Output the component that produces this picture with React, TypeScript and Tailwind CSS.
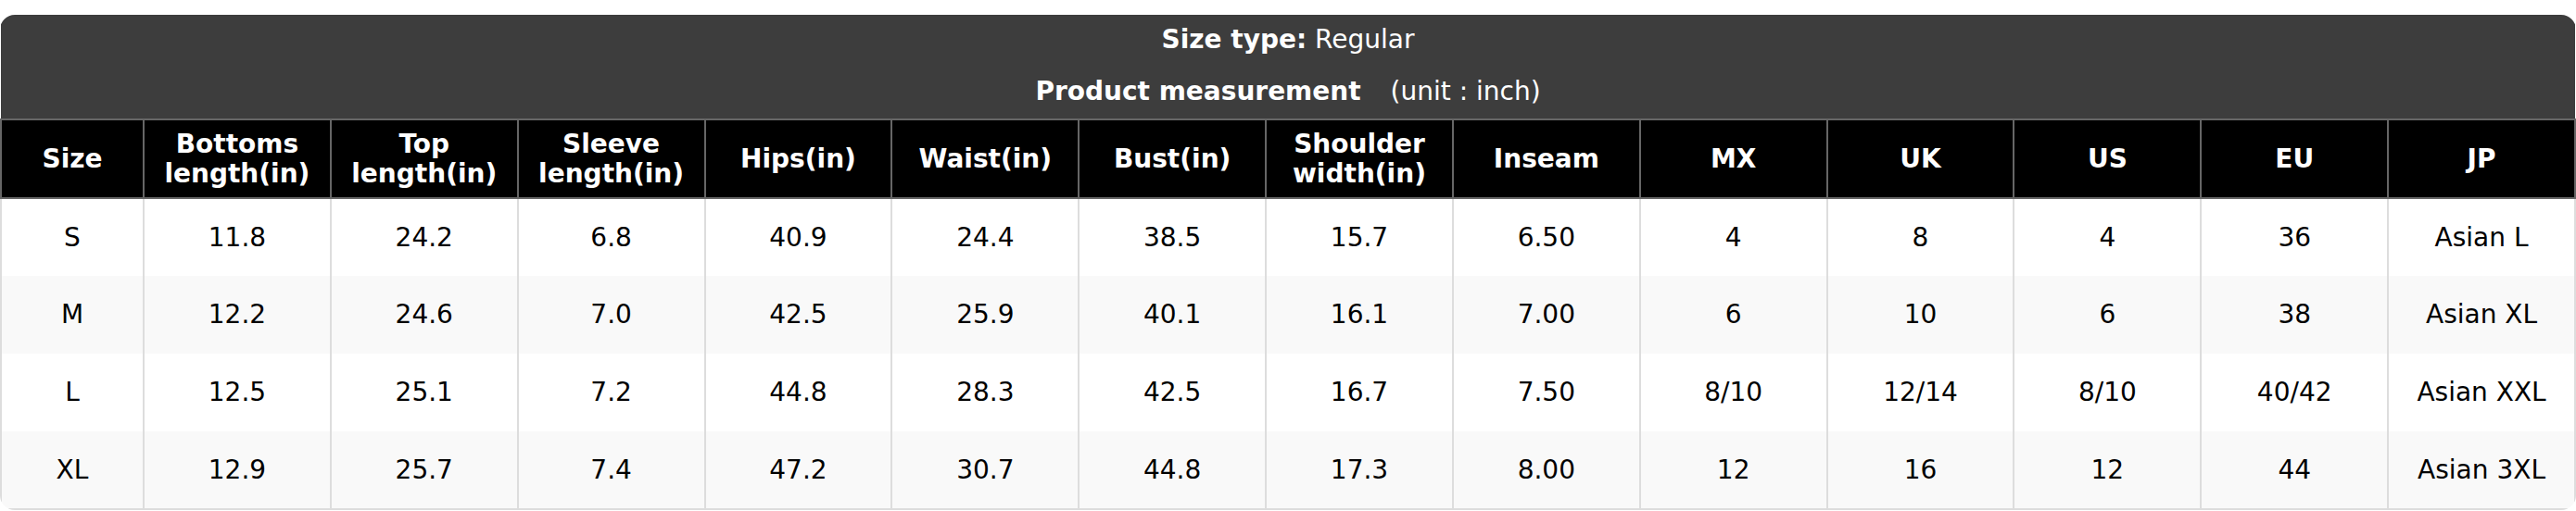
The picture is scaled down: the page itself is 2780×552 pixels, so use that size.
// Size chart card: dark caption, black header row, striped body rows.

const headers: string[][] = [
  ['Size'],
  ['Bottoms', 'length(in)'],
  ['Top', 'length(in)'],
  ['Sleeve', 'length(in)'],
  ['Hips(in)'],
  ['Waist(in)'],
  ['Bust(in)'],
  ['Shoulder', 'width(in)'],
  ['Inseam'],
  ['MX'],
  ['UK'],
  ['US'],
  ['EU'],
  ['JP'],
]

const rows: string[][] = [
  ['S', '11.8', '24.2', '6.8', '40.9', '24.4', '38.5', '15.7', '6.50', '4', '8', '4', '36', 'Asian L'],
  ['M', '12.2', '24.6', '7.0', '42.5', '25.9', '40.1', '16.1', '7.00', '6', '10', '6', '38', 'Asian XL'],
  ['L', '12.5', '25.1', '7.2', '44.8', '28.3', '42.5', '16.7', '7.50', '8/10', '12/14', '8/10', '40/42', 'Asian XXL'],
  ['XL', '12.9', '25.7', '7.4', '47.2', '30.7', '44.8', '17.3', '8.00', '12', '16', '12', '44', 'Asian 3XL'],
]

export default function App() {
  return (
    <div className="bg-white pt-[16px] font-['DejaVu_Sans',sans-serif] text-[28px]">
      <div className="rounded-[16px] overflow-hidden">
        <table className="w-full table-fixed border-collapse text-center">
          <colgroup>
            <col className="w-[154px]" />
            {headers.slice(1).map((_, i) => <col key={i} />)}
          </colgroup>
          <thead>
            <tr>
              <th colSpan={14} className="bg-[#3d3d3d] text-white p-0 font-normal">
                <div className="h-[54px] flex items-center justify-center leading-[32px]">
                  <span><b className="font-bold">Size type:</b> Regular</span>
                </div>
                <div className="h-[58px] flex items-center justify-center leading-[32px]">
                  <b className="font-bold">Product measurement</b>
                  <span className="ml-[32px]">(unit : inch)</span>
                </div>
              </th>
            </tr>
            <tr className="bg-black text-white h-[85px]">
              {headers.map((h, i) => (
                <th key={i} className="border-2 border-[#666] font-bold leading-[32px] px-1">
                  {h.map((line, j) => <div key={j}>{line}</div>)}
                </th>
              ))}
            </tr>
          </thead>
          <tbody>
            {rows.map((r, i) => (
              <tr key={i} className={i % 2 === 1 ? 'bg-[#f9f9f9] h-[84px]' : 'bg-white h-[84px]'}>
                {r.map((c, j) => (
                  <td
                    key={j}
                    className={
                      i === rows.length - 1
                        ? 'border-x-2 border-b-2 border-[#dddddd] text-black'
                        : 'border-x-2 border-[#dddddd] text-black'
                    }
                  >
                    {c}
                  </td>
                ))}
              </tr>
            ))}
          </tbody>
        </table>
      </div>
    </div>
  )
}
